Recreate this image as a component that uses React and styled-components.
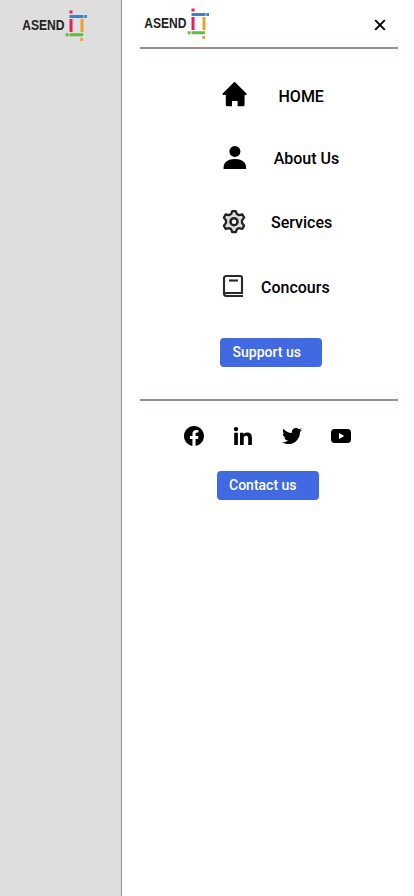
import React from "react";
import styled, { createGlobalStyle } from "styled-components";
import { FaTwitter } from "react-icons/fa";
import { BsFacebook } from "react-icons/bs";

const GlobalStyle = createGlobalStyle`
  * { box-sizing: border-box; }
  body { margin: 0; background: #fff; font-family: Roboto, sans-serif; color: #000; }
`;

const Page = styled.div`
  display: flex;
  height: 896px;
  overflow: hidden;
`;

const Backdrop = styled.aside`
  width: 122px;
  padding: 8px 0 0 20px;
  background: #dedede;
  border-right: 1px solid #988c8c;
`;

const Drawer = styled.main`
  flex: 1;
  display: flex;
  flex-direction: column;
  padding: 0 16px 0 18px;
`;

const Header = styled.header`
  display: flex;
  justify-content: space-between;
  height: 49px;
  padding: 6px 12px 0 2px;
  border-bottom: 2px solid #a48b8b;
`;

const LogoSvg = styled.svg`
  display: block;
  width: 70px;
  height: 36px;
`;

const LogoText = styled.text`
  font: 700 14px "Liberation Sans", sans-serif;
  fill: #222;
`;

const CloseButton = styled.button`
  width: 12px;
  height: 12px;
  margin-top: 13px;
  padding: 0;
  border: 0;
  background: none;
  svg { display: block; }
`;

const Nav = styled.nav`
  display: flex;
  flex-direction: column;
  height: 350px;
  padding: 32px 0 0 81px;
`;

const NavItem = styled.a`
  display: flex;
  align-items: center;
  height: 28px;
  margin-bottom: ${(p) => p.$after}px;
  font-size: 16px;
  font-weight: 500;
  line-height: 28px;
  svg { flex: none; display: block; }
`;

const NavLabel = styled.span`
  margin-left: ${(p) => p.$gap}px;
  padding-top: 3px;
  white-space: nowrap;
`;

const Action = styled.button`
  width: 102px;
  height: 29px;
  margin-left: ${(p) => p.$left}px;
  padding: 0 0 1px 12.5px;
  border: 0;
  border-radius: 4px;
  background: #4169e1;
  color: #fff;
  text-align: left;
  font: 500 14px/28px Roboto, sans-serif;
`;

const Footer = styled.footer`
  border-top: 2px solid #a48b8b;
`;

const Socials = styled.div`
  display: flex;
  align-items: center;
  gap: 29px;
  height: 20px;
  margin: 25px 0 25px 44px;
  svg { display: block; }
`;

function Logo() {
  return (
    <LogoSvg viewBox="0 0 70 36" aria-label="ASEND IT">
      <LogoText x="2.3" y="22.4" textLength="42.2" lengthAdjust="spacingAndGlyphs">ASEND</LogoText>
      <path fill="#e91e57" d="M49.5 2.5h3v3h-3zM49.5 11h3v13h-3z" />
      <path fill="#4480bd" d="M49.5 7h14v3h-14zM64.3 7h2.7v3h-2.7z" />
      <path fill="#ee9f27" d="M60.5 11h3v13h-3zM60.3 30h2.8v3h-2.8z" />
      <path fill="#65b947" d="M45.7 25.3h2.8v3h-2.8zM49.5 25.2h13.6v3h-13.6z" />
    </LogoSvg>
  );
}

function HomeIcon() {
  return (
    <svg width="26" height="28" viewBox="0 0 26 28">
      <path d="M12.9 1.2q.6-.4 1.2 0l11.3 11.2q1 1.5-.8 1.6h-1v9.8q0 1.5-1.5 1.5h-5.5v-5.2H11v5.2H6.2q-1.4 0-1.4-1.5V14H2.5q-1.7-.2-.5-1.7z" />
    </svg>
  );
}

function PersonIcon() {
  return (
    <svg width="26" height="28" viewBox="0 0 26 28">
      <circle cx="13.9" cy="8.4" r="5.5" />
      <path d="M2.6 26v-1.6c0-5.2 4.7-8.3 11.3-8.3s11.2 3.1 11.2 8.3V26z" />
    </svg>
  );
}

function GearIcon() {
  return (
    <svg width="26" height="28" viewBox="0 0 26 28" fill="none" stroke="#222" strokeWidth="2.3" strokeLinejoin="round">
      <path fill="#ddd" d="M11.3 4.1h3.4l1.2 3 1.7 1 3.800-.6 1.700 3.100-2.100 2.800v2.500l2.100 2.800-1.700 3.100-3.800-.6-1.700 1-1.200 3h-3.400l-1.200-3-1.700-1-3.800.6-1.700-3.100L5 15.900v-2.500l-2.100-2.800 1.700-3.100 3.800.6 1.700-1z" />
      <circle cx="13" cy="14.700" r="3.500" fill="#fff" strokeWidth="2.500" />
    </svg>
  );
}

function BookIcon() {
  return (
    <svg width="26" height="28" viewBox="0 0 26 28" fill="none" stroke="#292929" strokeWidth="2.1">
      <path d="M22 24H5.500Q3 24 3 21.500V6.500Q3 4 5.500 4H19q2 0 2 2v15H5.500Q3 21 3 22" />
      <path d="M8 8.500h9" />
    </svg>
  );
}

function LinkedinIcon() {
  return (
    <svg width="20" height="20" viewBox="0 0 20 20">
      <circle cx="3" cy="3.1" r="2.2" />
      <path d="M1.200 6.800h3.700V19H1.200zM7 6.800h3.500v1.700c.6-1.200 1.900-2 3.700-2 3.700 0 4.700 2.300 4.700 5.700V19h-3.700v-6.100c0-1.700-.2-3.100-2-3.100-1.900 0-2.500 1.400-2.500 3.100V19H7z" />
    </svg>
  );
}

function YoutubeIcon() {
  return (
    <svg width="20" height="20" viewBox="0 0 20 20">
      <path fillRule="evenodd" d="M3.500 3.100Q10 2.700 16.500 3.100 20 3.200 20 6.600v6.800q0 3.400-3.500 3.500-6.500.4-13 0Q0 16.800 0 13.400V6.600Q0 3.200 3.500 3.100M8 6.900v6.200l5.300-3.100z" />
    </svg>
  );
}

const items = [
  { label: "HOME", Icon: HomeIcon, gap: 31.5, after: 34 },
  { label: "About Us", Icon: PersonIcon, gap: 26.7, after: 36 },
  { label: "Services", Icon: GearIcon, gap: 24, after: 37 },
  { label: "Concours", Icon: BookIcon, gap: 14, after: 38 },
];

export default function App() {
  return (
    <Page>
      <GlobalStyle />
      <Backdrop><Logo /></Backdrop>
      <Drawer>
        <Header>
          <Logo />
          <CloseButton aria-label="Close">
            <svg width="12" height="12" viewBox="0 0 12 12" stroke="#000" strokeWidth="1.9">
              <path d="M1.2 1.2l9.6 9.6M10.8 1.2l-9.6 9.6" />
            </svg>
          </CloseButton>
        </Header>
        <Nav>
          {items.map(({ label, Icon, gap, after }) => (
            <NavItem key={label} $after={after}>
              <Icon />
              <NavLabel $gap={gap}>{label}</NavLabel>
            </NavItem>
          ))}
          <Action $left={-1}>Support us</Action>
        </Nav>
        <Footer>
          <Socials>
            <BsFacebook size={20} />
            <LinkedinIcon />
            <FaTwitter size={20} />
            <YoutubeIcon />
          </Socials>
          <Action $left={76.5}>Contact us</Action>
        </Footer>
      </Drawer>
    </Page>
  );
}
